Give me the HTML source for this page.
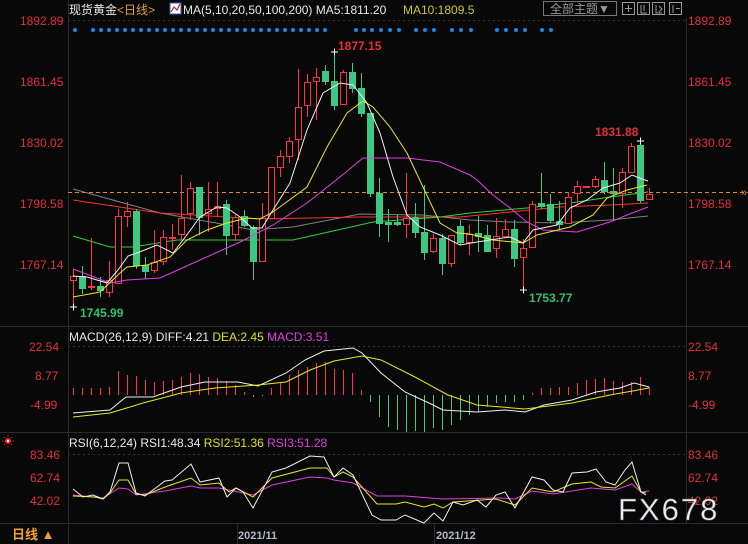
<!DOCTYPE html>
<html><head><meta charset="utf-8"><style>
html,body{margin:0;padding:0;background:#080808;}
svg{display:block;}
text{font-family:"Liberation Sans","Noto Sans CJK SC",sans-serif;}
</style></head><body>
<svg width="748" height="544" viewBox="0 0 748 544" xmlns="http://www.w3.org/2000/svg">
<rect width="748" height="544" fill="#080808"/>
<g stroke="#2a2a2a" stroke-width="1">
<line x1="68.5" y1="0" x2="68.5" y2="544"/>
<line x1="686.5" y1="18" x2="686.5" y2="523"/>
<line x1="0" y1="326.5" x2="748" y2="326.5"/>
<line x1="0" y1="432.5" x2="748" y2="432.5"/>
<line x1="0" y1="523.5" x2="748" y2="523.5"/>
</g>
<g stroke="#333" stroke-dasharray="2,3">
<line x1="68" y1="20.5" x2="686" y2="20.5"/>
<line x1="68" y1="346.5" x2="686" y2="346.5"/>
<line x1="68" y1="454.5" x2="686" y2="454.5"/>
</g>
<text x="69" y="14" font-size="12" fill="#e8e8e8">现货黄金<tspan fill="#e0a040">&lt;日线&gt;</tspan></text>
<rect x="170" y="3" width="11" height="11" fill="#fff" stroke="#3060c0"/>
<polyline points="171,12 174,7 177,10 180,4" fill="none" stroke="#d02020" stroke-width="1.2"/>
<text x="183" y="14" font-size="12" fill="#e8e8e8">MA(5,10,20,50,100,200)  MA5:1811.20</text>
<text x="403" y="14" font-size="12" fill="#c8c820">MA10:1809.5</text>
<rect x="543.5" y="1.5" width="73" height="14" fill="none" stroke="#777"/>
<text x="550" y="13" font-size="12" fill="#999">全部主题▼</text>
<g fill="none" stroke="#999">
<rect x="622.5" y="2.5" width="12" height="12"/><rect x="637.5" y="2.5" width="12" height="12"/><rect x="652.5" y="2.5" width="12" height="12"/><rect x="669.5" y="2.5" width="12" height="12"/>
<path d="M628.5 5v7M625 8.5h7M641 5v8h6M644 5v6M656 5v8h6M659 6l3 3-3 3M673 5v8M676 8.5h4"/>
</g>
<g font-size="12" fill="#e0303a">
<text x="20" y="25">1892.89</text><text x="20" y="86">1861.45</text><text x="20" y="147">1830.02</text><text x="20" y="208">1798.58</text><text x="20" y="269">1767.14</text>
<text x="688" y="25">1892.89</text><text x="688" y="86">1861.45</text><text x="688" y="147">1830.02</text><text x="688" y="208">1798.58</text><text x="688" y="269">1767.14</text>
<text x="29" y="351">22.54</text><text x="35" y="380">8.77</text><text x="30" y="409">-4.99</text>
<text x="688" y="351">22.54</text><text x="688" y="380">8.77</text><text x="688" y="409">-4.99</text>
<text x="30" y="459">83.46</text><text x="30" y="482">62.74</text><text x="30" y="505">42.02</text>
<text x="688" y="459">83.46</text><text x="688" y="482">62.74</text><text x="688" y="505">42.02</text>
</g>
<g fill="#1e88e0">
<circle cx="75" cy="30" r="2"/>
<circle cx="93" cy="30" r="2"/><circle cx="101" cy="30" r="2"/><circle cx="109" cy="30" r="2"/><circle cx="117" cy="30" r="2"/><circle cx="125" cy="30" r="2"/><circle cx="133" cy="30" r="2"/><circle cx="141" cy="30" r="2"/><circle cx="149" cy="30" r="2"/><circle cx="157" cy="30" r="2"/><circle cx="165" cy="30" r="2"/><circle cx="173" cy="30" r="2"/><circle cx="181" cy="30" r="2"/><circle cx="189" cy="30" r="2"/><circle cx="197" cy="30" r="2"/><circle cx="205" cy="30" r="2"/><circle cx="213" cy="30" r="2"/><circle cx="221" cy="30" r="2"/><circle cx="229" cy="30" r="2"/><circle cx="237" cy="30" r="2"/><circle cx="245" cy="30" r="2"/><circle cx="253" cy="30" r="2"/><circle cx="261" cy="30" r="2"/><circle cx="269" cy="30" r="2"/><circle cx="277" cy="30" r="2"/><circle cx="285" cy="30" r="2"/><circle cx="293" cy="30" r="2"/><circle cx="301" cy="30" r="2"/><circle cx="309" cy="30" r="2"/><circle cx="317" cy="30" r="2"/><circle cx="325" cy="30" r="2"/><circle cx="356" cy="30" r="2"/><circle cx="364" cy="30" r="2"/><circle cx="372" cy="30" r="2"/>
<circle cx="381" cy="30" r="2"/><circle cx="390" cy="30" r="2"/><circle cx="399" cy="30" r="2"/>
<circle cx="416" cy="30" r="2"/><circle cx="425" cy="30" r="2"/><circle cx="434" cy="30" r="2"/>
<circle cx="452" cy="30" r="2"/><circle cx="461" cy="30" r="2"/><circle cx="471" cy="30" r="2"/>
<circle cx="497" cy="30" r="2"/><circle cx="506" cy="30" r="2"/><circle cx="516" cy="30" r="2"/><circle cx="525" cy="30" r="2"/>
<circle cx="542" cy="30" r="2"/><circle cx="551" cy="30" r="2"/>
</g>
<g fill="none" stroke-width="1">
<polyline stroke="#808080" points="73,189 160,213 227,225 253,230 293,227 360,214 423,215 470,220 510,222 560,223 610,220 648,216"/>
<polyline stroke="#ff3030" points="73,200 160,213 260,219 360,217 460,217 510,212 560,207 610,205 648,203"/>
<polyline stroke="#30d030" points="73,236 110,247 133,247 177,240 293,240 373,222 440,217 470,213 527,208 577,202 610,197 633,194 648,192"/>
</g>
<line x1="68" y1="192.5" x2="748" y2="192.5" stroke="#e08a30" stroke-dasharray="4,3"/>
<g stroke-width="1">
<g stroke="#ff3344" fill="#080808">
<line x1="73.5" y1="269" x2="73.5" y2="307"/><rect x="70.5" y="276.5" width="6" height="4"/>
<line x1="91.5" y1="238" x2="91.5" y2="290"/><rect x="88.5" y="286.5" width="6" height="1"/>
<line x1="109.5" y1="261" x2="109.5" y2="297"/><rect x="106.5" y="280.5" width="6" height="12"/>
<line x1="118.5" y1="209" x2="118.5" y2="283"/><rect x="115.5" y="216.5" width="6" height="67"/>
<line x1="127.5" y1="202" x2="127.5" y2="227"/><rect x="124.5" y="211.5" width="6" height="5"/>
<line x1="154.5" y1="230" x2="154.5" y2="273"/><rect x="151.5" y="262.5" width="6" height="8"/>
<line x1="163.5" y1="230" x2="163.5" y2="265"/><rect x="160.5" y="237.5" width="6" height="24"/>
<line x1="172.5" y1="224" x2="172.5" y2="250"/><rect x="169.5" y="237.5" width="6" height="1"/>
<line x1="181.5" y1="175" x2="181.5" y2="240"/><rect x="178.5" y="218.5" width="6" height="16"/>
<line x1="190.5" y1="182" x2="190.5" y2="220"/><rect x="187.5" y="188.5" width="6" height="25"/>
<line x1="208.5" y1="182" x2="208.5" y2="232"/><rect x="205.5" y="209.5" width="6" height="4"/>
<line x1="217.5" y1="182" x2="217.5" y2="217"/><rect x="214.5" y="206.5" width="6" height="2"/>
<line x1="235.5" y1="215" x2="235.5" y2="241"/><rect x="232.5" y="217.5" width="6" height="17"/>
<line x1="262.5" y1="203" x2="262.5" y2="262"/><rect x="259.5" y="218.5" width="6" height="43"/>
<rect x="268.5" y="167.5" width="6" height="51"/>
<line x1="280.5" y1="150" x2="280.5" y2="177"/><rect x="277.5" y="156.5" width="6" height="11"/>
<line x1="289.5" y1="137" x2="289.5" y2="163"/><rect x="286.5" y="141.5" width="6" height="15"/>
<line x1="298.5" y1="69" x2="298.5" y2="160"/><rect x="295.5" y="107.5" width="6" height="32"/>
<line x1="307.5" y1="74" x2="307.5" y2="117"/><rect x="304.5" y="82.5" width="6" height="23"/>
<line x1="316.5" y1="68" x2="316.5" y2="120"/><rect x="313.5" y="77.5" width="6" height="4"/>
<line x1="343.5" y1="70" x2="343.5" y2="104"/><rect x="340.5" y="72.5" width="6" height="32"/>
<line x1="406.5" y1="173" x2="406.5" y2="238"/><rect x="403.5" y="218.5" width="6" height="6"/>
<line x1="433.5" y1="234" x2="433.5" y2="253"/><rect x="430.5" y="238.5" width="6" height="13"/>
<line x1="451.5" y1="235" x2="451.5" y2="267"/><rect x="448.5" y="235.5" width="6" height="28"/>
<line x1="469.5" y1="225" x2="469.5" y2="255"/><rect x="466.5" y="234.5" width="6" height="8"/>
<line x1="496.5" y1="218" x2="496.5" y2="258"/><rect x="493.5" y="236.5" width="6" height="12"/>
<line x1="505.5" y1="219" x2="505.5" y2="236"/><rect x="502.5" y="229.5" width="6" height="7"/>
<line x1="523.5" y1="239" x2="523.5" y2="292"/><rect x="520.5" y="248.5" width="6" height="9"/>
<line x1="532.5" y1="201" x2="532.5" y2="248"/><rect x="529.5" y="204.5" width="6" height="43"/>
<line x1="568.5" y1="192" x2="568.5" y2="223"/><rect x="565.5" y="197.5" width="6" height="26"/>
<line x1="577.5" y1="181" x2="577.5" y2="203"/><rect x="574.5" y="186.5" width="6" height="7"/>
<rect x="583.5" y="186.5" width="6" height="1"/>
<line x1="595.5" y1="176" x2="595.5" y2="188"/><rect x="592.5" y="179.5" width="6" height="7"/>
<line x1="622.5" y1="168" x2="622.5" y2="208"/><rect x="619.5" y="172.5" width="6" height="21"/>
<line x1="631.5" y1="143" x2="631.5" y2="173"/><rect x="628.5" y="146.5" width="6" height="26"/>
<line x1="649.5" y1="188" x2="649.5" y2="200"/><rect x="646.5" y="194.5" width="6" height="5"/>
</g>
<g stroke="#3cc880" fill="#3cc880">
<line x1="82.5" y1="266" x2="82.5" y2="294"/><rect x="79.5" y="276.5" width="6" height="12"/>
<line x1="100.5" y1="277" x2="100.5" y2="297"/><rect x="97.5" y="286.5" width="6" height="4"/>
<line x1="136.5" y1="209" x2="136.5" y2="269"/><rect x="133.5" y="211.5" width="6" height="54"/>
<line x1="145.5" y1="257" x2="145.5" y2="279"/><rect x="142.5" y="265.5" width="6" height="6"/>
<line x1="199.5" y1="187" x2="199.5" y2="235"/><rect x="196.5" y="187.5" width="6" height="30"/>
<line x1="226.5" y1="200" x2="226.5" y2="255"/><rect x="223.5" y="204.5" width="6" height="31"/>
<line x1="244.5" y1="210" x2="244.5" y2="227"/><rect x="241.5" y="216.5" width="6" height="9"/>
<line x1="253.5" y1="225" x2="253.5" y2="280"/><rect x="250.5" y="227.5" width="6" height="34"/>
<line x1="325.5" y1="65" x2="325.5" y2="85"/><rect x="322.5" y="71.5" width="6" height="10"/>
<line x1="334.5" y1="52" x2="334.5" y2="110"/><rect x="331.5" y="81.5" width="6" height="24"/>
<line x1="352.5" y1="63" x2="352.5" y2="93"/><rect x="349.5" y="72.5" width="6" height="16"/>
<line x1="361.5" y1="73" x2="361.5" y2="117"/><rect x="358.5" y="88.5" width="6" height="25"/>
<line x1="370.5" y1="113" x2="370.5" y2="197"/><rect x="367.5" y="113.5" width="6" height="80"/>
<line x1="379.5" y1="178" x2="379.5" y2="237"/><rect x="376.5" y="193.5" width="6" height="30"/>
<line x1="388.5" y1="209" x2="388.5" y2="242"/><rect x="385.5" y="222.5" width="6" height="2"/>
<line x1="397.5" y1="215" x2="397.5" y2="226"/><rect x="394.5" y="222.5" width="6" height="2"/>
<line x1="415.5" y1="203" x2="415.5" y2="238"/><rect x="412.5" y="217.5" width="6" height="15"/>
<line x1="424.5" y1="185" x2="424.5" y2="260"/><rect x="421.5" y="232.5" width="6" height="20"/>
<line x1="442.5" y1="234" x2="442.5" y2="275"/><rect x="439.5" y="238.5" width="6" height="25"/>
<line x1="460.5" y1="220" x2="460.5" y2="245"/><rect x="457.5" y="226.5" width="6" height="16"/>
<line x1="478.5" y1="216" x2="478.5" y2="252"/><rect x="475.5" y="233.5" width="6" height="3"/>
<line x1="487.5" y1="225" x2="487.5" y2="252"/><rect x="484.5" y="235.5" width="6" height="16"/>
<line x1="514.5" y1="220" x2="514.5" y2="267"/><rect x="511.5" y="229.5" width="6" height="29"/>
<line x1="541.5" y1="173" x2="541.5" y2="209"/><rect x="538.5" y="203.5" width="6" height="3"/>
<line x1="550.5" y1="194" x2="550.5" y2="223"/><rect x="547.5" y="204.5" width="6" height="16"/>
<line x1="559.5" y1="201" x2="559.5" y2="230"/><rect x="556.5" y="221.5" width="6" height="3"/>
<line x1="604.5" y1="162" x2="604.5" y2="194"/><rect x="601.5" y="180.5" width="6" height="11"/>
<line x1="613.5" y1="168" x2="613.5" y2="220"/><rect x="610.5" y="191.5" width="6" height="2"/>
<line x1="640.5" y1="141" x2="640.5" y2="203"/><rect x="637.5" y="145.5" width="6" height="55"/>
</g>
</g>
<g fill="none" stroke-width="1">
<polyline stroke="#e040e0" points="73,269 110,283 127,280 160,278 200,260 240,242 273,225 307,203 340,177 363,158 407,158 440,162 470,175 477,180 493,195 510,208 527,222 543,230 577,232 610,222 627,215 648,207"/>
<polyline stroke="#e8e820" points="73,297 100,292 120,273 127,267 147,265 170,257 187,240 207,230 227,223 247,218 260,219 273,212 307,187 327,147 347,113 363,101 373,107 390,127 407,153 423,187 440,223 457,233 470,234 493,240 523,243 537,235 570,227 593,215 607,198 627,190 647,185"/>
<polyline stroke="#f0f0f0" points="73,276 87,277 107,283 118,270 128,256 137,253 157,245 173,253 183,240 200,217 217,207 227,208 240,217 252,228 262,228 273,210 290,183 307,130 323,93 340,83 353,85 367,103 380,133 393,177 407,215 420,227 440,235 460,245 477,242 510,237 523,243 533,230 557,225 570,208 587,200 603,188 620,183 632,175 642,179 648,181"/>
</g>
<g stroke="#fff"><path d="M331 52h7M334.5 48.5v7M70 307h7M73.5 303.5v7M520 290h7M523.5 286.5v7M637 141h7M640.5 137.5v7"/></g>
<g font-size="12" font-weight="bold">
<text x="338" y="50" fill="#e0303a">1877.15</text>
<text x="80" y="317" fill="#30c070">1745.99</text>
<text x="529" y="302" fill="#30c070">1753.77</text>
<text x="595" y="136" fill="#e0303a">1831.88</text>
</g>
<text x="741" y="196" font-size="11" fill="#e08a30">»</text>
<text x="69" y="341" font-size="12" fill="#e8e8e8">MACD(26,12,9) DIFF:4.21 <tspan fill="#e0e020">DEA:2.45</tspan> <tspan fill="#e040e0">MACD:3.51</tspan></text>
<g stroke="#ff3344" stroke-width="1">
<path d="M73.5 395V388M82.5 395V388M91.5 395V388M100.5 395V388M109.5 395V387M118.5 395V371M127.5 395V375M136.5 395V376M145.5 395V380M154.5 395V382M163.5 395V381M172.5 395V380M181.5 395V377M190.5 395V373M199.5 395V374M208.5 395V377M217.5 395V378M226.5 395V381M235.5 395V385M244.5 395V392M271.5 395V388M280.5 395V382M289.5 395V375M298.5 395V370M307.5 395V367M316.5 395V363M325.5 395V362M334.5 395V369M343.5 395V370M352.5 395V373M361.5 395V390M532.5 395V393M541.5 395V388M550.5 395V388M559.5 395V387M568.5 395V387M577.5 395V383M586.5 395V380M595.5 395V379M604.5 395V378M613.5 395V381M622.5 395V382M631.5 395V382M640.5 395V377M649.5 395V387"/>
</g>
<g stroke="#3cc880" stroke-width="1">
<path d="M253.5 395V397M262.5 395V396M370.5 395V402M379.5 395V417M388.5 395V427M397.5 395V430M406.5 395V432M415.5 395V431M424.5 395V432M433.5 395V428M442.5 395V430M451.5 395V425M460.5 395V420M469.5 395V415M478.5 395V412M487.5 395V407M496.5 395V403M505.5 395V402M514.5 395V402M523.5 395V400"/>
</g>
<g fill="none">
<polyline stroke="#f0f0f0" points="73,413 110,410 126,397 153,397 181,387 205,382 238,382 258,386 286,373 305,360 324,351 353,348 362,353 381,373 405,392 429,403 443,410 477,412 505,410 525,412 544,405 572,400 596,392 620,388 634,383 649,387"/>
<polyline stroke="#e8e820" points="73,417 110,413 143,403 181,393 215,388 258,385 286,382 310,370 334,361 362,356 381,360 415,377 448,395 477,405 525,409 572,403 610,395 649,388"/>
</g>
<circle cx="8" cy="441" r="3" fill="#ff2020"/><circle cx="8" cy="441" r="1.2" fill="#fff"/>
<g stroke="#ff2020" stroke-width="0.8"><path d="M8 435v1.5M8 445.5v1.5M2 441h1.5M12.5 441h1.5M4 437l1 1M11 444l1 1M12 437l-1 1M5 444l-1 1"/></g>
<text x="69" y="447" font-size="12" fill="#e8e8e8">RSI(6,12,24) RSI1:48.34 <tspan fill="#e0e020">RSI2:51.36</tspan> <tspan fill="#e040e0">RSI3:51.28</tspan></text>
<g fill="none">
<polyline stroke="#e040e0" points="73,495 103,498 119,488 128,489 136,495 165,491 191,486 200,488 219,488 253,495 272,485 310,477 327,478 334,480 353,483 377,496 405,496 443,499 501,498 515,499 532,491 553,494 591,488 615,490 632,484 641,492 649,491"/>
<polyline stroke="#e8e820" points="73,496 95,497 103,499 110,493 119,480 128,480 136,494 145,495 165,487 191,478 200,485 219,483 229,492 236,488 253,497 272,478 310,468 327,468 334,477 343,472 353,477 377,504 396,504 405,502 424,507 434,504 443,508 453,502 496,499 515,505 532,488 553,492 572,484 591,482 601,487 615,488 632,476 641,492 646,493"/>
<polyline stroke="#f0f0f0" points="73,489 83,497 93,495 103,499 110,492 119,463 128,463 136,493 145,496 165,481 172,480 191,464 200,482 219,478 227,497 236,488 243,492 253,508 272,472 286,468 310,456 324,457 334,477 343,468 353,475 372,515 381,520 396,520 405,515 424,523 434,513 443,521 453,502 463,505 477,500 486,507 496,495 505,492 515,508 532,477 544,480 553,490 563,492 572,473 587,472 596,469 606,482 615,485 625,470 632,462 641,492 646,495"/>
</g>
<text x="618" y="520" font-size="31" fill="#e8eef4" stroke="#555" stroke-width="0.5" letter-spacing="2">FX678</text>
<text x="12" y="539" font-size="13" fill="#f0a030" font-weight="bold">日线 ▲</text>
<line x1="237.5" y1="524" x2="237.5" y2="544" stroke="#2a2a2a"/>
<line x1="434.5" y1="524" x2="434.5" y2="544" stroke="#2a2a2a"/>
<text x="238" y="539" font-size="11" font-weight="bold" fill="#b0b8c0">2021/11</text>
<text x="436" y="539" font-size="11" font-weight="bold" fill="#b0b8c0">2021/12</text>
</svg>
</body></html>
